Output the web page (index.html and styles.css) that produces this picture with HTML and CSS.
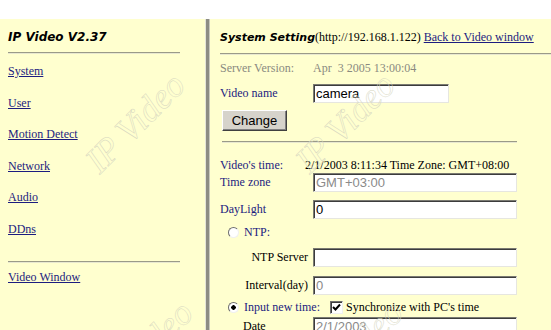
FILE: index.html
```html
<!DOCTYPE html>
<html lang="en">
<head>
  <meta charset="UTF-8">
  <title>IP Video V2.37</title>
  <link rel="stylesheet" href="styles.css">
</head>
<body>
  <div class="frames">
    <!-- menu frame -->
    <aside class="menu">
      <span class="mark mark-top">IP Video</span>
      <span class="mark mark-bottom">IP Video</span>
      <h1 class="logo">IP Video V2.37</h1>
      <hr class="rule">
      <nav class="links">
        <a href="#">System</a>
        <a href="#">User</a>
        <a href="#">Motion Detect</a>
        <a href="#">Network</a>
        <a href="#">Audio</a>
        <a href="#">DDns</a>
      </nav>
      <hr class="rule rule-low">
      <a href="#" class="video-link">Video Window</a>
    </aside>

    <div class="splitter"></div>

    <!-- settings frame -->
    <main class="settings">
      <span class="mark mark-top">IP Video</span>
      <span class="mark mark-bottom">IP Video</span>
      <div class="title-row">
        <span class="title">System Setting</span><span>(http://192.168.1.122)</span>
        <a href="#">Back to Video window</a>
      </div>
      <hr class="rule wide">

      <div class="row r-server">
        <span class="label dim">Server Version:</span>
        <span class="value dim">Apr&nbsp; 3 2005 13:00:04</span>
      </div>
      <div class="row r-name">
        <span class="label">Video name</span>
        <input type="text" class="field short" value="camera">
      </div>
      <div class="row r-button">
        <button class="btn">Change</button>
      </div>

      <hr class="rule mid">

      <div class="row r-time">
        <span class="label">Video's time:</span>
        <span class="value now">2/1/2003 8:11:34 Time Zone: GMT+08:00</span>
      </div>
      <div class="row r-zone">
        <span class="label">Time zone</span>
        <input type="text" class="field" value="GMT+03:00" disabled>
      </div>
      <div class="row r-day">
        <span class="label">DayLight</span>
        <input type="text" class="field" value="0">
      </div>
      <div class="row r-ntp">
        <span class="radio"></span>
        <span class="label">NTP:</span>
      </div>
      <div class="row r-server2">
        <span class="label right">NTP Server</span>
        <input type="text" class="field" value="">
      </div>
      <div class="row r-interval">
        <span class="label right">Interval(day)</span>
        <input type="text" class="field" value="0" disabled>
      </div>
      <div class="row r-input">
        <span class="radio on"></span>
        <span class="label">Input new time:</span>
        <span class="check"><svg width="9" height="9" viewBox="0 0 9 9"><path d="M1 4 L3.5 6.5 L8 1.5" fill="none" stroke="#000" stroke-width="2"/></svg></span>
        <span class="sync">Synchronize with PC's time</span>
      </div>
      <div class="row r-date">
        <span class="label sub">Date</span>
        <input type="text" class="field" value="2/1/2003" disabled>
      </div>
    </main>
  </div>
</body>
</html>
```

FILE: styles.css
```css
body {
  margin: 0;
  padding-top: 19px;
  background-color: #ffffff;
  font-family: "Liberation Serif", "Times New Roman", serif;
  font-size: 12px;
  color: #000;
  overflow: hidden;
}

a {
  color: #1c1c80;
}

.frames {
  display: flex;
  height: 311px;
  background-color: #ffffcf;
}

/* menu frame */
.menu {
  position: relative;
  width: 205px;
  padding: 0 8px;
  box-sizing: border-box;
  overflow: hidden;
}

.logo {
  margin: 9px 0 0;
  font-family: "DejaVu Sans", sans-serif;
  font-style: italic;
  font-weight: bold;
  font-size: 12px;
  line-height: 18px;
  color: #000;
}

.rule {
  height: 0;
  margin: 6px 0 0;
  border: none;
  border-top: 1px solid #9a9a88;
  border-bottom: 1px solid #e8e8d0;
  width: 172px;
}

.links {
  display: flex;
  flex-direction: column;
  gap: 15.5px;
  margin-top: 9px;
}

.links a,
.video-link {
  display: block;
  line-height: 16px;
  height: 16px;
}

.rule-low {
  margin-top: 24px;
}

.video-link {
  margin-top: 6px;
}

.splitter {
  width: 3px;
  background-color: #8c8c84;
  border-left: 1px solid #e4e4d8;
  border-right: 1px solid #c8c8bc;
}

/* settings frame */
.settings {
  position: relative;
  flex: 1;
  padding-left: 10px;
  overflow: hidden;
}

.title-row {
  margin-top: 9px;
  line-height: 18px;
  white-space: nowrap;
}

.title {
  font-family: "DejaVu Sans", sans-serif;
  font-style: italic;
  font-weight: bold;
  font-size: 11px;
}

.rule.wide {
  width: auto;
  margin: 6px 0 0 0;
}

.rule.mid {
  width: 295px;
  margin: 10px 0 0 2px;
}

.row {
  display: flex;
  align-items: center;
  height: 18px;
  white-space: nowrap;
}

.label {
  width: 93px;
  flex-shrink: 0;
  color: #1c1c80;
}

.label.dim,
.value.dim {
  color: #8a8a80;
}

.label.right {
  text-align: right;
  padding-right: 5px;
  box-sizing: border-box;
  color: #000;
}

.label.sub {
  padding-left: 23px;
  box-sizing: border-box;
  color: #000;
}

.value.now {
  margin-left: -8px;
}

.r-server { margin-top: 4px; }
.r-name { margin-top: 6px; height: 20px; }
.r-button { margin-top: 6px; height: 22px; }
.r-time { margin-top: 14px; height: 16px; }
.r-zone { height: 19px; }
.r-day { margin-top: 8px; height: 19px; }
.r-ntp { margin-top: 4px; }
.r-server2 { margin-top: 7px; }
.r-interval { margin-top: 10px; }
.r-input { margin-top: 4px; }
.r-date { margin-top: 1px; }

.field {
  width: 204px;
  height: 19px;
  box-sizing: border-box;
  padding: 1px 2px;
  margin: 0;
  background: #fff;
  border: 1px solid;
  border-color: #7a7a72 #e6e6e0 #e6e6e0 #7a7a72;
  box-shadow: inset 1px 1px 0 #3c3c3c;
  font-family: "Liberation Sans", Arial, sans-serif;
  font-size: 13px;
  color: #000;
}

.field.short {
  width: 136px;
}

.field:disabled {
  color: #8a8a8a;
}

.btn {
  margin-left: 2px;
  width: 65px;
  height: 21px;
  padding: 0;
  background-color: #d6d3cb;
  border: 1px solid;
  border-color: #fff #404040 #404040 #fff;
  box-shadow: inset -1px -1px 0 #808080;
  font-family: "Liberation Sans", Arial, sans-serif;
  font-size: 13px;
  color: #000;
}

.radio {
  width: 11px;
  height: 11px;
  margin: 0 5px 0 8px;
  box-sizing: border-box;
  border-radius: 50%;
  background-color: #fff;
  border: 1px solid;
  border-color: #6e6e6e #f0f0f0 #f0f0f0 #6e6e6e;
  flex-shrink: 0;
}

.radio.on {
  background: radial-gradient(circle, #000 0 2px, #fff 2.5px);
}

.r-ntp .label,
.r-input .label {
  width: auto;
}

.check {
  display: flex;
  align-items: center;
  justify-content: center;
  width: 13px;
  height: 13px;
  box-sizing: border-box;
  margin: 0 3px 0 10px;
  background: #fff;
  border: 1px solid;
  border-color: #6e6e6e #f0f0f0 #f0f0f0 #6e6e6e;
  box-shadow: inset 1px 1px 0 #3c3c3c;
}

/* watermark */
.mark {
  position: absolute;
  font-family: "Liberation Serif", serif;
  font-style: italic;
  font-size: 36px;
  line-height: 36px;
  color: transparent;
  -webkit-text-stroke: 0.5px #d6d6c0;
  transform: rotate(-45deg);
  transform-origin: 0 100%;
  white-space: nowrap;
  pointer-events: none;
}

.mark-top {
  left: 104px;
  top: 124px;
}

.mark-bottom {
  left: 112px;
  top: 352px;
}
```
